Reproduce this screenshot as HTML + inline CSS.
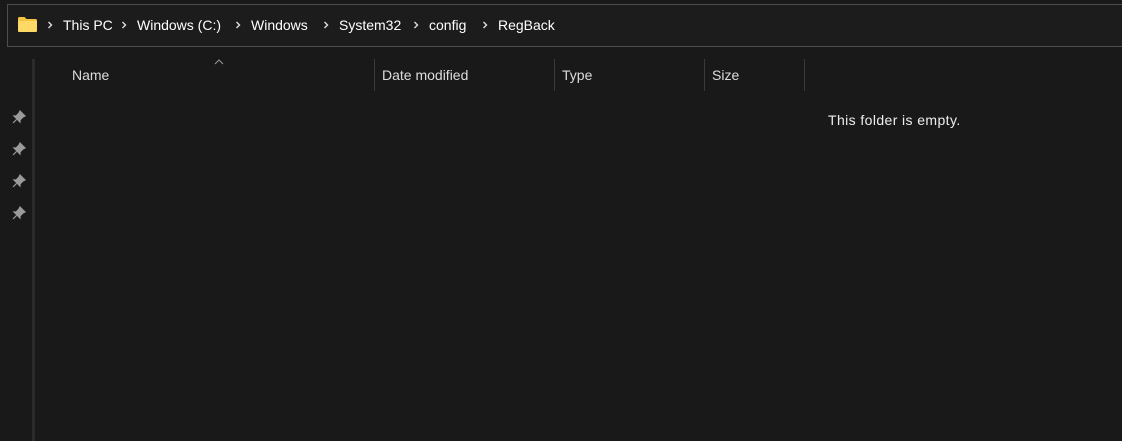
<!DOCTYPE html>
<html><head><style>
body{margin:0;width:1122px;height:441px;background:#191919;overflow:hidden;font-family:"Segoe UI","Liberation Sans",sans-serif;color:#fff;position:relative}
.bar{position:absolute;left:7px;top:4px;width:1130px;height:43px;border:1px solid #4d4d4d;box-sizing:border-box;background:#1c1c1c}
.t{position:absolute;font-size:14px;white-space:nowrap}
.sep{position:absolute;top:59px;width:1px;height:32px;background:#3a3a3a}
.vl{position:absolute;left:32px;top:59px;width:3px;height:382px;background:#2b2b2b}
.pin{position:absolute;left:12px;width:14px;height:14px}
.ch{position:absolute;top:21px;width:6px;height:8px}
</style></head><body>
<div class="bar"></div>
<svg style="position:absolute;left:18px;top:17px" width="19" height="15" viewBox="0 0 19 15"><path d="M0 1.5Q0 0 1.5 0H6.5L8.5 2H17.5Q19 2 19 3.5V13.5Q19 15 17.5 15H1.5Q0 15 0 13.5Z" fill="#f4c542"/><path d="M0 4H19V13.5Q19 15 17.5 15H1.5Q0 15 0 13.5Z" fill="#ffd966"/></svg>
<svg class="ch" style="left:47px" viewBox="0 0 6 8"><path d="M1.5 1L4.5 4L1.5 7" stroke="#ddd" stroke-width="1.4" fill="none"/></svg>
<div class="t" style="left:63px;top:17px">This PC</div>
<svg class="ch" style="left:121px" viewBox="0 0 6 8"><path d="M1.5 1L4.5 4L1.5 7" stroke="#ddd" stroke-width="1.4" fill="none"/></svg>
<div class="t" style="left:137px;top:17px">Windows (C:)</div>
<svg class="ch" style="left:235px" viewBox="0 0 6 8"><path d="M1.5 1L4.5 4L1.5 7" stroke="#ddd" stroke-width="1.4" fill="none"/></svg>
<div class="t" style="left:251px;top:17px">Windows</div>
<svg class="ch" style="left:323px" viewBox="0 0 6 8"><path d="M1.5 1L4.5 4L1.5 7" stroke="#ddd" stroke-width="1.4" fill="none"/></svg>
<div class="t" style="left:339px;top:17px">System32</div>
<svg class="ch" style="left:413px" viewBox="0 0 6 8"><path d="M1.5 1L4.5 4L1.5 7" stroke="#ddd" stroke-width="1.4" fill="none"/></svg>
<div class="t" style="left:429px;top:17px">config</div>
<svg class="ch" style="left:482px" viewBox="0 0 6 8"><path d="M1.5 1L4.5 4L1.5 7" stroke="#ddd" stroke-width="1.4" fill="none"/></svg>
<div class="t" style="left:498px;top:17px">RegBack</div>
<div class="vl"></div>
<svg style="position:absolute;left:214px;top:59px" width="10" height="6" viewBox="0 0 10 6"><path d="M1 5L5 1L9 5" stroke="#999" stroke-width="1" fill="none"/></svg>
<div class="t" style="left:72px;top:67px;color:#ddd">Name</div>
<div class="sep" style="left:374px"></div>
<div class="t" style="left:382px;top:67px;color:#ddd">Date modified</div>
<div class="sep" style="left:554px"></div>
<div class="t" style="left:562px;top:67px;color:#ddd">Type</div>
<div class="sep" style="left:704px"></div>
<div class="t" style="left:712px;top:67px;color:#ddd">Size</div>
<div class="sep" style="left:804px"></div>
<div class="t" style="left:828px;top:112px;color:#eee;letter-spacing:0.4px">This folder is empty.</div>
<svg class="pin" style="top:110px" viewBox="0 0 14 14"><path d="M8 1L13 6L11 7L8 10L8 12L2 6L4 6L7 3Z M4.5 9.5L1 13" fill="#9a9a9a" stroke="#9a9a9a" stroke-width="1.2"/></svg>
<svg class="pin" style="top:142px" viewBox="0 0 14 14"><path d="M8 1L13 6L11 7L8 10L8 12L2 6L4 6L7 3Z M4.5 9.5L1 13" fill="#9a9a9a" stroke="#9a9a9a" stroke-width="1.2"/></svg>
<svg class="pin" style="top:174px" viewBox="0 0 14 14"><path d="M8 1L13 6L11 7L8 10L8 12L2 6L4 6L7 3Z M4.5 9.5L1 13" fill="#9a9a9a" stroke="#9a9a9a" stroke-width="1.2"/></svg>
<svg class="pin" style="top:206px" viewBox="0 0 14 14"><path d="M8 1L13 6L11 7L8 10L8 12L2 6L4 6L7 3Z M4.5 9.5L1 13" fill="#9a9a9a" stroke="#9a9a9a" stroke-width="1.2"/></svg>
</body></html>
